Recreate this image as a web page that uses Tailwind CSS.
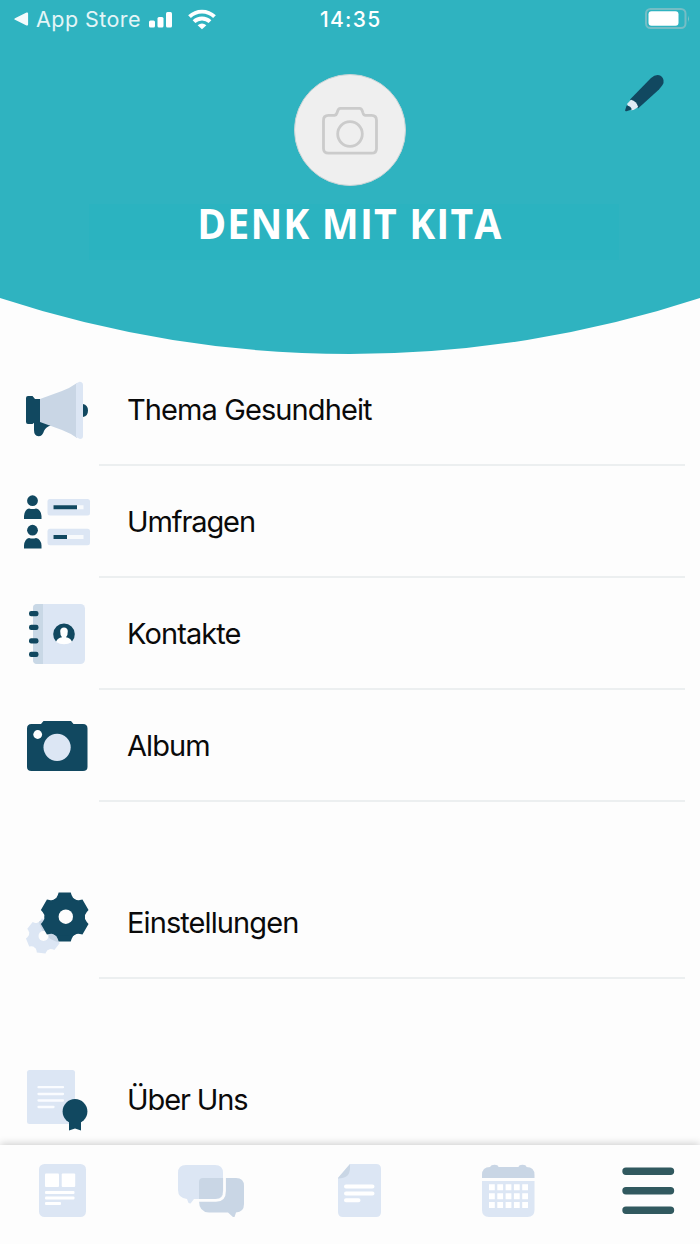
<!DOCTYPE html>
<html lang="de">
<head>
  <meta charset="UTF-8">
  <meta name="viewport" content="width=device-width, initial-scale=1.0">
  <script src="https://cdn.jsdelivr.net/npm/@tailwindcss/browser@4"></script>
  <title>Denk mit Kita</title>
</head>
<body class="bg-[#fdfdfd] font-['Inter',sans-serif] text-[#0a0a0a]">
  <div class="relative flex h-[1244px] w-[700px] flex-col overflow-hidden">
    <header class="relative h-[354px] shrink-0">
      <svg class="absolute inset-0" width="700" height="355" viewBox="0 0 700 355">
        <path d="M0 0H700V298A1122 1122 0 0 1 0 298Z" fill="#2fb3c0"/>
      </svg>
      <div class="relative flex h-[38px] items-center text-white">
        <div class="flex w-[320px] items-center pl-[14px]">
          <svg width="15" height="14" viewBox="0 0 15 14"><path d="M1 6.2 12.5.6q1.6-.6 1.6 1v10.8q0 1.6-1.6 1L1 7.8q-1.4-.8 0-1.6z" fill="#f4fbfc"/></svg>
          <span class="mt-0.5 ml-[7px] w-[113px] text-[21.5px] leading-none tracking-[0.45px] whitespace-nowrap text-[#e4f5f7]">App Store</span>
          <svg class="mt-0.5" width="24" height="16" viewBox="0 0 24 16" fill="#fff"><rect x="0" y="8.500" width="6" height="7" rx="1.500"/><rect x="8.500" y="5" width="6" height="10.500" rx="1.500"/><rect x="17" y="0" width="6" height="15.500" rx="1.500"/></svg>
          <svg class="ml-[15px]" width="28" height="21" viewBox="0 0 28 21" fill="none" stroke="#fff" stroke-width="3.900"><path d="M1.500 7.700A18 18 0 0 1 26.500 7.700"/><path d="M6 12.700A11.600 11.600 0 0 1 22 12.700"/><path d="M14 20.200 9.600 16.300Q14 12.700 18.400 16.300Z" fill="#fff" stroke="none"/></svg>
        </div>
        <span class="w-[325px] text-[21px] leading-none font-medium tracking-[1.3px]">14:35</span>
        <svg class="-mt-px" width="46" height="22" viewBox="0 0 46 22"><rect x="1" y="1" width="39.500" height="19" rx="4.500" fill="none" stroke="#75bdc5" stroke-width="2"/><rect x="3.500" y="3.300" width="30" height="14.400" rx="3" fill="#fff"/><path d="M43 7.500q1.800 3.200 0 6.500z" fill="#8ac4c9"/></svg>
      </div>
      <button class="absolute top-[70px] right-[33px]" aria-label="Bearbeiten">
        <svg width="48" height="46" viewBox="0 0 48 46">
          <path d="M11 29.500 32 8Q37.500 3 42 6 46.500 10 43.500 15L40 19.500 19 38.500Z" fill="#114860"/>
          <path d="M8 34 12 29.800Q17.500 31 19.200 37L14.500 40 12 40.300Z" fill="#dfebf5"/>
          <path d="M7.600 35.600Q12 36 12.800 39.600L7.500 41.300Q5.600 41.500 6.200 40Z" fill="#114860"/>
        </svg>
      </button>
      <div class="relative mt-[36px] flex flex-col items-center">
        <div class="flex size-28 items-center justify-center rounded-full border border-[#c9d4d6] bg-[#efefef]">
          <svg class="mt-px" width="58" height="50" viewBox="0 0 58 50" fill="none" stroke="#cbcbcb" stroke-width="2.800" stroke-linejoin="round"><path d="M7.500 9.400H13.500Q15.500 9 16.200 6.500 17 2.400 19.500 2.400H38.500Q41 2.400 41.800 6.500 42.500 9.400 44.500 9.400H50.500Q55.500 9.400 55.500 14.400V42.400Q55.500 47.200 50.500 47.200H7.500Q2.500 47.200 2.500 42.400V14.400Q2.500 9.400 7.500 9.400Z"/><circle cx="29" cy="28" r="12.300"/></svg>
        </div>
        <h1 class="mt-[18px] ml-2 flex h-[56px] w-[530px] justify-center bg-[#2bb3c0] pr-[8px] font-['Open_Sans',sans-serif] text-[41px] leading-[38px] font-bold tracking-[1.2px] whitespace-nowrap text-white"><span class="origin-center scale-x-[0.955]">DENK MIT KITA</span></h1>
      </div>
    </header>

    <main class="text-[29px] tracking-[-0.9px]">
      <div class="flex h-28">
        <svg class="shrink-0" width="99" height="112" viewBox="0 0 99 112">
          <path d="M34 67H41L51 71.500Q46 72.500 44 77 42.500 82.300 38.500 82.300 34 82 34 76Z" fill="#114860"/>
          <path d="M28 42H32.500L35 45H42V68H35L32.500 70H28Q26 70 26 68V44Q26 42 28 42Z" fill="#114860"/>
          <path d="M83 50q5 1 5 6.500T83 63z" fill="#114860"/>
          <path d="M40 45 62 37Q70 34 77 29V84Q70 79 62 76L40 68Z" fill="#c9d6e5"/>
          <path d="M76 29.500 79.500 27.700Q83 28 83 31V82Q83 85 80 85L76 83Z" fill="#dce6f4"/>
        </svg>
        <div class="mr-[15px] flex flex-1 items-center border-b-2 border-[#eceff0] pt-px pl-7">Thema Gesundheit</div>
      </div>
      <div class="flex h-28">
        <svg class="shrink-0" width="99" height="112" viewBox="0 0 99 112">
          <g id="person" fill="#114860"><circle cx="32.500" cy="34.700" r="5.400"/><path d="M24 53V50Q24.500 43.500 29 42.500 32.700 43.500 36 42.500 41 43.500 41.500 50V53Z"/></g>
          <use href="#person" y="29.500"/>
          <g fill="#dce6f4"><rect x="47.500" y="33" width="42.500" height="16.500" rx="2.500"/><rect x="47.500" y="62.700" width="42.500" height="16.500" rx="2.500"/></g>
          <path d="M53.500 39.200H83.500V43.200H53.500ZM53.500 69H83.500V73H53.500Z" fill="#f8fafc"/>
          <path d="M53.500 39.200H77V43.200H53.500ZM53.500 69H67V73H53.500Z" fill="#114860"/>
        </svg>
        <div class="mr-[15px] flex flex-1 items-center border-b-2 border-[#eceff0] pt-px pl-7 tracking-[-1.1px]">Umfragen</div>
      </div>
      <div class="flex h-28">
        <svg class="shrink-0" width="99" height="112" viewBox="0 0 99 112">
          <rect x="33" y="26" width="52" height="60" rx="4.500" fill="#dce6f4"/>
          <path d="M37 26H43V86H37Q33 86 33 82V30Q33 26 37 26Z" fill="#c9d8e6"/>
          <g fill="#114860"><rect x="29" y="33" width="9.500" height="5.200" rx="2.200"/><rect x="29" y="46.800" width="9.500" height="5.200" rx="2.200"/><rect x="29" y="60.200" width="9.500" height="5.200" rx="2.200"/><rect x="29" y="73.800" width="9.500" height="5.200" rx="2.200"/></g>
          <path d="M56 63.500A10.800 10.800 0 1 1 72 63.500Z" fill="#114860"/>
          <path d="M56 64Q57.500 59.800 62 59.300 60 57 60.200 53 60.500 49.500 64 49.500T67.800 53Q68 57 66 59.300 70.500 59.800 72 64 64 68.500 56 64Z" fill="#fff"/>
        </svg>
        <div class="mr-[15px] flex flex-1 items-center border-b-2 border-[#eceff0] pt-px pl-7">Kontakte</div>
      </div>
      <div class="flex h-28">
        <svg class="shrink-0" width="99" height="112" viewBox="0 0 99 112">
          <path d="M31.500 34H41L43.500 31H71L73.500 34H83Q87.500 34 87.500 38.500V77Q87.500 81 83 81H31.500Q27 81 27 77V38.500Q27 34 31.500 34Z" fill="#114860"/>
          <circle cx="37.700" cy="44.500" r="4.400" fill="#fff"/><circle cx="57.100" cy="57.300" r="13.600" fill="#dce6f4"/>
        </svg>
        <div class="mr-[15px] flex flex-1 items-center border-b-2 border-[#eceff0] pt-px pl-7">Album</div>
      </div>

      <div class="mt-[65px] flex h-28">
        <svg class="shrink-0" width="99" height="112" viewBox="0 0 99 112">
          <defs>
            <path id="tooth" d="M-11.500-17Q-8-18.500-7-22L-6.200-24.500H6.200L7-22Q8-18.500 11.500-17L8 0H-8Z"/>
            <g id="gear"><use href="#tooth"/><use href="#tooth" transform="rotate(60)"/><use href="#tooth" transform="rotate(120)"/><use href="#tooth" transform="rotate(180)"/><use href="#tooth" transform="rotate(240)"/><use href="#tooth" transform="rotate(300)"/><circle r="19"/></g>
            <clipPath id="back"><circle cx="43.500" cy="69" r="15.500"/></clipPath>
          </defs>
          <use href="#gear" transform="translate(43.500 69) rotate(8) scale(.7)" fill="#dce6f4"/>
          <circle cx="64.700" cy="50" r="26" fill="#c9d6e5" clip-path="url(#back)"/>
          <circle cx="43.500" cy="69" r="5" fill="#fdfdfd"/>
          <use href="#gear" transform="translate(64.700 50) scale(.98 1)" fill="#114860"/>
          <circle cx="65.800" cy="49.700" r="7.200" fill="#fdfdfd"/>
        </svg>
        <div class="mr-[15px] flex flex-1 items-center border-b-2 border-[#eceff0] pt-px pl-7">Einstellungen</div>
      </div>

      <div class="mt-[65px] flex h-28">
        <svg class="shrink-0" width="99" height="112" viewBox="0 0 99 112">
          <rect x="27" y="26" width="48" height="54" rx="2.500" fill="#dce6f4"/>
          <path d="M38.500 43.200H63M38.500 50H63M38.500 56.500H63M38.500 63H53.500" stroke="#fafcff" stroke-width="2.300" stroke-linecap="round"/>
          <circle cx="75" cy="67.500" r="12.400" fill="#114860"/>
          <path d="M69 77H81V86.500L75 84.500 69 86.500Z" fill="#114860"/>
        </svg>
        <div class="flex flex-1 items-center pl-7 tracking-[-1.1px]">Über Uns</div>
      </div>
    </main>

    <nav class="absolute inset-x-0 bottom-0 flex h-[99px] bg-[#fdfdfd] pt-[18px] pl-[39px] shadow-[0_-1px_8px_rgba(0,0,0,0.2)]">
      <svg width="48" height="56" viewBox="0 0 48 56"><rect x="0" y="1" width="47" height="53" rx="5.500" fill="#dce6f4"/><g fill="#fff"><rect x="6" y="10.500" width="14" height="13.500" rx="1"/><rect x="22.700" y="10.500" width="13.500" height="13.500" rx="1"/><rect x="6" y="28" width="29.500" height="3" rx="1"/><rect x="6" y="33.500" width="29.500" height="3" rx="1"/><rect x="6" y="39" width="16" height="3" rx="1"/></g></svg>
      <svg class="ml-[91px]" width="67" height="56" viewBox="0 0 67 56">
        <path d="M29 15H58Q66 15 66 23V41Q66 49 58 49.500L56.500 54 55 54 50 49.500H31Q21 49 21 38V23Q21 15 29 15Z" fill="#c9d6e5"/>
        <path d="M8 2H37Q45 2 45 10V27Q45 36 37 36H16L12.500 40.500 10.500 40 9 36Q0 35 0 27V10Q0 2 8 2Z" fill="#dce6f4"/>
        <path d="M25 15H45V27Q45 36 37 36H21V19Q21 15 25 15Z" fill="#c9d6e5"/>
        <path d="M46.500 14V28Q46.500 37.400 38 37.400H17" fill="none" stroke="#fdfdfd" stroke-width="2.800"/>
      </svg>
      <svg class="ml-[92px]" width="45" height="56" viewBox="0 0 45 56"><path d="M13 1H39Q44 1 44 6V49Q44 54 39 54H6Q1 54 1 49V15Z" fill="#dce6f4"/><path d="M13 1V5Q13 15.500 1 15.500V15Z" fill="#c9d6e5"/><path d="M9 23.500H35.500M9 30.500H35.500M9 37.300H21.500" stroke="#fff" stroke-width="4" stroke-linecap="round"/></svg>
      <svg class="ml-[100px]" width="53" height="56" viewBox="0 0 53 56">
        <path d="M0 15V12Q0 4 8 4 9 1.800 12.500 1.800T16.500 4H36.500Q37 1.800 40.500 1.800T44.500 4Q52.500 4 52.500 12V15Z" fill="#c9d6e5"/>
        <path d="M0 18H52.500V47Q52.500 54 45.500 54H7Q0 54 0 47Z" fill="#dce6f4"/>
        <path d="M7 24.200H46M7 33.200H46M7 42H46" stroke="#fff" stroke-width="6" stroke-dasharray="5.800 2.500"/>
      </svg>
      <svg class="ml-[87px]" width="53" height="56" viewBox="0 0 53 56"><path d="M4 8.200H48.500M4 27.800H48.500M4 47.300H48.500" stroke="#31595f" stroke-width="7.400" stroke-linecap="round"/></svg>
    </nav>
  </div>
</body>
</html>
